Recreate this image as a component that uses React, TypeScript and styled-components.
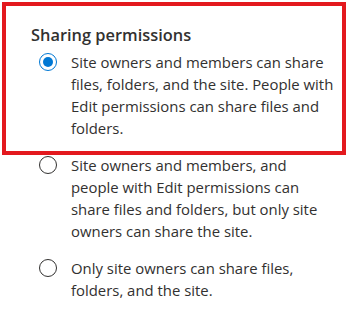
import styled, { createGlobalStyle } from 'styled-components';

const GlobalStyle = createGlobalStyle`
  html, body {
    margin: 0;
    padding: 0;
    background: #ffffff;
  }
  body {
    font-family: "Open Sans", "Noto Sans", sans-serif;
    color: #323130;
  }
`;

const Page = styled.div`
  position: relative;
  width: 348px;
  height: 317px;
  overflow: hidden;
`;

const Section = styled.div`
  padding: 24px 0 0 31px;
`;

const Heading = styled.h2`
  margin: 0 0 5px;
  font-size: 16.4px;
  font-weight: 600;
  line-height: 22px;
`;

const Options = styled.div`
  display: flex;
  flex-direction: column;
  gap: 15px;
`;

const Option = styled.label`
  display: flex;
  align-items: flex-start;
  gap: 14px;
  padding-left: 8px;
  cursor: pointer;
`;

const Circle = styled.span<{ checked: boolean }>`
  flex: none;
  box-sizing: border-box;
  width: 18px;
  height: 18px;
  margin-top: 2px;
  border-radius: 50%;
  border: 1px solid ${({ checked }) => (checked ? '#0078d4' : '#323130')};
  display: flex;
  align-items: center;
  justify-content: center;

  &::after {
    content: '';
    width: 10px;
    height: 10px;
    border-radius: 50%;
    background: #0078d4;
    display: ${({ checked }) => (checked ? 'block' : 'none')};
  }
`;

const Text = styled.span`
  font-size: 14.9px;
  line-height: 22px;
  white-space: nowrap;
`;

const Highlight = styled.div`
  position: absolute;
  left: 2px;
  top: 2px;
  width: 344px;
  height: 153px;
  box-sizing: border-box;
  border: 4px solid #e3191e;
  pointer-events: none;
`;

const options = [
  [
    'Site owners and members can share',
    'files, folders, and the site. People with',
    'Edit permissions can share files and',
    'folders.',
  ],
  [
    'Site owners and members, and',
    'people with Edit permissions can',
    'share files and folders, but only site',
    'owners can share the site.',
  ],
  ['Only site owners can share files,', 'folders, and the site.'],
];

export default function App() {
  return (
    <Page>
      <GlobalStyle />
      <Section>
        <Heading>Sharing permissions</Heading>
        <Options>
          {options.map((lines, i) => (
            <Option key={i}>
              <Circle checked={i === 0} />
              <Text>
                {lines.map((line, j) => (
                  <span key={j}>
                    {j > 0 && <br />}
                    {line}
                  </span>
                ))}
              </Text>
            </Option>
          ))}
        </Options>
      </Section>
      <Highlight />
    </Page>
  );
}
